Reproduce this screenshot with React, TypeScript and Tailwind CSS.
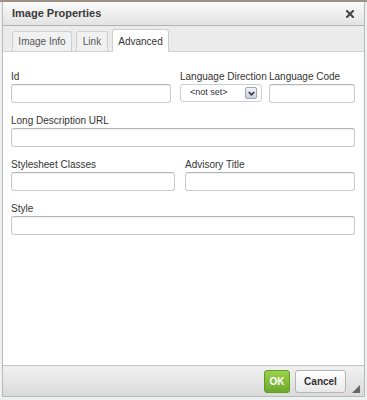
const inputCls =
  'block h-[19px] w-full rounded-[3px] border border-[#c9c9c9] border-t-[#b4b4b4] bg-white shadow-[inset_0_1px_1px_rgba(0,0,0,0.06)]';

function Field({ label, className = '' }: { label: string; className?: string }) {
  return (
    <div className={className}>
      <div className="mb-[1px] h-[12px] whitespace-nowrap text-[10px] leading-[12px] text-[#333]">{label}</div>
      <div className={inputCls} />
    </div>
  );
}

const tabs = [
  { name: 'Image Info', w: 'w-[60px]', active: false },
  { name: 'Link', w: 'w-[32px]', active: false },
  { name: 'Advanced', w: 'w-[57px]', active: true },
];

export default function App() {
  return (
    <div className="h-[400px] w-[367px] overflow-hidden bg-[#eef1f1] font-['Liberation_Sans',Arial,sans-serif]">
      <div className="h-[2px] bg-[#9c8f84]" />
      <div className="ml-[2px] flex h-[395px] w-[363px] flex-col border-x border-b border-[#b9b9b9] bg-white">
        {/* Title bar */}
        <div className="flex h-[24px] items-center justify-between border-b border-[#b2b2b2] bg-gradient-to-b from-[#fafafa] to-[#e3e3e3] pl-[9px] pr-[8px]">
          <span className="text-[11px] font-bold text-[#3a3a3a]">Image Properties</span>
          <svg width="8" height="8" viewBox="0 0 8 8" className="mr-[2px]">
            <path d="M1 1 L7 7 M7 1 L1 7" stroke="#444" strokeWidth="2" strokeLinecap="square" />
          </svg>
        </div>

        {/* Tabs */}
        <div className="flex h-[26px] items-end gap-[4px] border-b border-[#cfcfcf] bg-[#ebebeb] pl-[9px]">
          {tabs.map((t) => (
            <div
              key={t.name}
              className={`${t.w} flex items-center justify-center rounded-t-[3px] border border-b-0 border-[#cfcfcf] text-[10px] ${
                t.active
                  ? '-mb-px h-[23px] bg-white text-[#333]'
                  : 'h-[20px] bg-[#f1f1f1] text-[#555]'
              }`}
            >
              {t.name}
            </div>
          ))}
        </div>

        {/* Body */}
        <div className="flex flex-1 flex-col gap-[12px] pl-[8px] pr-[9px] pt-[19px]">
          <div className="grid grid-cols-[169px_89px_86px]">
            <Field label="Id" className="w-[160px]" />
            <div>
              <div className="mb-[1px] h-[12px] whitespace-nowrap text-[10px] leading-[12px] text-[#333]">
                Language Direction
              </div>
              <div className="flex h-[18px] w-[82px] items-center justify-between rounded-[3px] border border-[#cfcfcf] bg-white pl-[9px] pr-[4px]">
                <span className="text-[9px] text-[#333]">&lt;not set&gt;</span>
                <div className="flex h-[12px] w-[12px] items-center justify-center rounded-[2px] border border-[#9aa6b8] bg-gradient-to-b from-[#f2f4f7] to-[#c9d0da]">
                  <svg width="7" height="5" viewBox="0 0 7 5">
                    <path d="M0.8 1 L3.5 3.8 L6.2 1" fill="none" stroke="#2c3440" strokeWidth="1.6" />
                  </svg>
                </div>
              </div>
            </div>
            <Field label="Language Code" />
          </div>

          <Field label="Long Description URL" />

          <div className="grid grid-cols-[164px_170px] gap-x-[10px]">
            <Field label="Stylesheet Classes" />
            <Field label="Advisory Title" />
          </div>

          <Field label="Style" />
        </div>

        {/* Footer */}
        <div className="relative flex h-[31px] items-center justify-end gap-[5px] border-t border-[#c4c4c4] bg-gradient-to-b from-[#f1f1f1] to-[#dadada] pr-[18px]">
          <button className="flex h-[23px] w-[26px] items-center justify-center rounded-[3px] border border-[#5f9d24] bg-gradient-to-b from-[#9bd14c] to-[#6ea82c] text-[10px] font-bold text-white">
            OK
          </button>
          <button className="flex h-[23px] w-[51px] items-center justify-center rounded-[3px] border border-[#b5b5b5] bg-gradient-to-b from-white to-[#e8e8e8] text-[10px] font-bold text-[#333]">
            Cancel
          </button>
          <svg width="8" height="8" viewBox="0 0 8 8" className="absolute bottom-[3px] right-[4px]">
            <path d="M8 0 L8 8 L0 8 Z" fill="#666" />
          </svg>
        </div>
      </div>
    </div>
  );
}
